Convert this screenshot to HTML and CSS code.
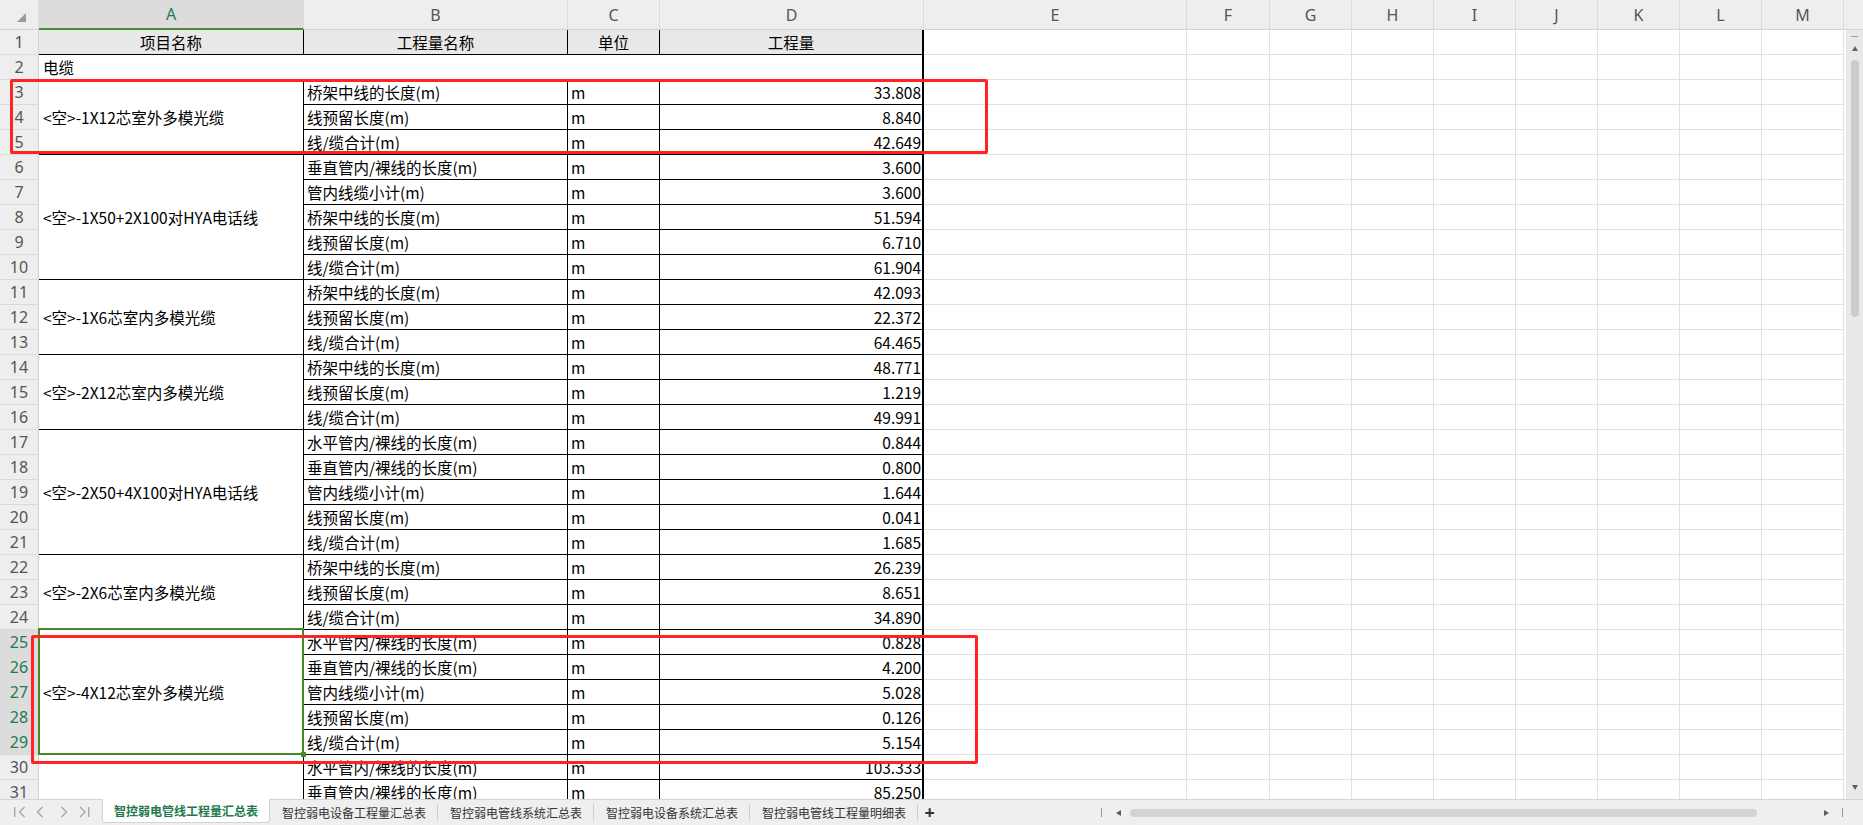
FILE: index.html
```html
<!DOCTYPE html>
<html lang="zh-CN">
<head>
<meta charset="utf-8">
<title>智控弱电管线工程量汇总表</title>
<link rel="stylesheet" href="styles.css">
</head>
<body>
<div class="app">
  <div class="sheet">
    <div class="grid">
      <div class="colhdrs">
        <div class="ch w-rh corner"><svg width="39" height="30" viewBox="0 0 39 30"><polygon points="26,13 26,22 17,22" fill="#9a9a9a"/></svg></div>
        <div class="ch w-a sel">A</div>
        <div class="ch w-b">B</div>
        <div class="ch w-c">C</div>
        <div class="ch w-d">D</div>
        <div class="ch w-e">E</div>
        <div class="ch w-f">F</div>
        <div class="ch w-g">G</div>
        <div class="ch w-g">H</div>
        <div class="ch w-g">I</div>
        <div class="ch w-g">J</div>
        <div class="ch w-g">K</div>
        <div class="ch w-g">L</div>
        <div class="ch w-g">M</div>
      </div>
      <div class="body">
        <div class="rowhdrs">
          <div class="rh">1</div><div class="rh">2</div><div class="rh">3</div><div class="rh">4</div><div class="rh">5</div>
          <div class="rh">6</div><div class="rh">7</div><div class="rh">8</div><div class="rh">9</div><div class="rh">10</div>
          <div class="rh">11</div><div class="rh">12</div><div class="rh">13</div><div class="rh">14</div><div class="rh">15</div>
          <div class="rh">16</div><div class="rh">17</div><div class="rh">18</div><div class="rh">19</div><div class="rh">20</div>
          <div class="rh">21</div><div class="rh">22</div><div class="rh">23</div><div class="rh">24</div>
          <div class="rh sel">25</div><div class="rh sel">26</div><div class="rh sel">27</div><div class="rh sel">28</div><div class="rh sel">29</div>
          <div class="rh">30</div><div class="rh">31</div>
        </div>
        <div class="table">
          <div class="c hd">项目名称</div><div class="c hd">工程量名称</div><div class="c hd">单位</div><div class="c hd dh">工程量</div>
          <div class="c full">电缆</div>

          <div class="c a r3">&lt;空&gt;-1X12芯室外多模光缆</div>
          <div class="c">桥架中线的长度(m)</div><div class="c">m</div><div class="c d">33.808</div>
          <div class="c">线预留长度(m)</div><div class="c">m</div><div class="c d">8.840</div>
          <div class="c">线/缆合计(m)</div><div class="c">m</div><div class="c d">42.649</div>

          <div class="c a r5">&lt;空&gt;-1X50+2X100对HYA电话线</div>
          <div class="c">垂直管内/裸线的长度(m)</div><div class="c">m</div><div class="c d">3.600</div>
          <div class="c">管内线缆小计(m)</div><div class="c">m</div><div class="c d">3.600</div>
          <div class="c">桥架中线的长度(m)</div><div class="c">m</div><div class="c d">51.594</div>
          <div class="c">线预留长度(m)</div><div class="c">m</div><div class="c d">6.710</div>
          <div class="c">线/缆合计(m)</div><div class="c">m</div><div class="c d">61.904</div>

          <div class="c a r3">&lt;空&gt;-1X6芯室内多模光缆</div>
          <div class="c">桥架中线的长度(m)</div><div class="c">m</div><div class="c d">42.093</div>
          <div class="c">线预留长度(m)</div><div class="c">m</div><div class="c d">22.372</div>
          <div class="c">线/缆合计(m)</div><div class="c">m</div><div class="c d">64.465</div>

          <div class="c a r3">&lt;空&gt;-2X12芯室内多模光缆</div>
          <div class="c">桥架中线的长度(m)</div><div class="c">m</div><div class="c d">48.771</div>
          <div class="c">线预留长度(m)</div><div class="c">m</div><div class="c d">1.219</div>
          <div class="c">线/缆合计(m)</div><div class="c">m</div><div class="c d">49.991</div>

          <div class="c a r5">&lt;空&gt;-2X50+4X100对HYA电话线</div>
          <div class="c">水平管内/裸线的长度(m)</div><div class="c">m</div><div class="c d">0.844</div>
          <div class="c">垂直管内/裸线的长度(m)</div><div class="c">m</div><div class="c d">0.800</div>
          <div class="c">管内线缆小计(m)</div><div class="c">m</div><div class="c d">1.644</div>
          <div class="c">线预留长度(m)</div><div class="c">m</div><div class="c d">0.041</div>
          <div class="c">线/缆合计(m)</div><div class="c">m</div><div class="c d">1.685</div>

          <div class="c a r3">&lt;空&gt;-2X6芯室内多模光缆</div>
          <div class="c">桥架中线的长度(m)</div><div class="c">m</div><div class="c d">26.239</div>
          <div class="c">线预留长度(m)</div><div class="c">m</div><div class="c d">8.651</div>
          <div class="c">线/缆合计(m)</div><div class="c">m</div><div class="c d">34.890</div>

          <div class="c a r5">&lt;空&gt;-4X12芯室外多模光缆</div>
          <div class="c">水平管内/裸线的长度(m)</div><div class="c">m</div><div class="c d">0.828</div>
          <div class="c">垂直管内/裸线的长度(m)</div><div class="c">m</div><div class="c d">4.200</div>
          <div class="c">管内线缆小计(m)</div><div class="c">m</div><div class="c d">5.028</div>
          <div class="c">线预留长度(m)</div><div class="c">m</div><div class="c d">0.126</div>
          <div class="c">线/缆合计(m)</div><div class="c">m</div><div class="c d">5.154</div>

          <div class="c a r2"></div>
          <div class="c">水平管内/裸线的长度(m)</div><div class="c">m</div><div class="c d">103.333</div>
          <div class="c">垂直管内/裸线的长度(m)</div><div class="c">m</div><div class="c d">85.250</div>
        </div>
        <div class="empty">
          <div class="ecol w-e"></div>
          <div class="ecol w-f"></div>
          <div class="ecol w-g"></div>
          <div class="ecol w-g"></div>
          <div class="ecol w-g"></div>
          <div class="ecol w-g"></div>
          <div class="ecol w-g"></div>
          <div class="ecol w-g"></div>
          <div class="ecol w-g"></div>
        </div>
      </div>
      <div class="selbox"><div class="handle"></div></div>
      <div class="redbox rb1"></div>
      <div class="redbox rb2"></div>
    </div>
    <div class="vscroll">
      <div class="vs-top"></div>
      <div class="vs-track">
        <div class="vs-dash"></div>
        <div class="tri up"></div>
        <div class="vs-thumb"></div>
        <div class="vs-fill"></div>
        <div class="tri down"></div>
      </div>
    </div>
  </div>
  <div class="tabbar">
    <div class="nav">
      <svg width="102" height="25" viewBox="0 0 102 25">
        <g fill="none" stroke="#a8a8a8" stroke-width="1.4">
          <line x1="14.7" y1="7" x2="14.7" y2="17"/>
          <polyline points="24.5,7 19.5,12 24.5,17"/>
          <polyline points="42.5,7 37.5,12 42.5,17"/>
          <polyline points="61.5,7 66.5,12 61.5,17"/>
          <polyline points="80,7 85,12 80,17"/>
          <line x1="88.7" y1="7" x2="88.7" y2="17"/>
        </g>
      </svg>
    </div>
    <div class="tab active">智控弱电管线工程量汇总表</div>
    <div class="tab">智控弱电设备工程量汇总表</div><div class="sep"></div>
    <div class="tab">智控弱电管线系统汇总表</div><div class="sep"></div>
    <div class="tab">智控弱电设备系统汇总表</div><div class="sep"></div>
    <div class="tab">智控弱电管线工程量明细表</div><div class="sep"></div>
    <div class="plus">+</div>
    <div class="hscroll">
      <div class="hs-bar"></div>
      <div class="tri left"></div>
      <div class="hs-thumb"></div>
      <div class="tri right"></div>
      <div class="hs-bar end"></div>
    </div>
  </div>
</div>
</body>
</html>
```
FILE: styles.css
```css
* { box-sizing: border-box; margin: 0; padding: 0; }
html, body { width: 1863px; height: 825px; overflow: hidden; background: #fff; }
body { font-family: "Noto Sans CJK SC", "Noto Sans", sans-serif; color: #000; }

.app { display: flex; flex-direction: column; width: 1863px; height: 825px; }
.sheet { display: flex; height: 799px; flex: none; overflow: hidden; }
.grid { position: relative; width: 1844px; flex: none; display: flex; flex-direction: column; }

.w-rh { width: 39px; }
.w-a { width: 265px; }
.w-b { width: 264px; }
.w-c { width: 92px; }
.w-d { width: 264px; }
.w-e { width: 263px; }
.w-f { width: 83px; }
.w-g { width: 82px; }

/* column headers */
.colhdrs { display: flex; height: 30px; flex: none; }
.ch {
  flex: none; height: 30px; background: #eeeeee;
  border-right: 1px solid #dadada; border-bottom: 1px solid #d2d2d2;
  font-family: "Noto Sans", sans-serif; font-size: 16px; color: #555;
  display: flex; align-items: center; justify-content: center;
}
.ch.corner { display: block; }
.ch.corner svg { display: block; }
.ch.sel { background: #dcdcdc; color: #1f7a4c; border-bottom: 2px solid #4a8c2b; }

/* body */
.body { display: flex; height: 775px; flex: none; }
.rowhdrs { width: 39px; flex: none; display: flex; flex-direction: column; }
.rh {
  height: 25px; flex: none; background: #eeeeee;
  border-right: 1px solid #d2d2d2; border-bottom: 1px solid #dadada;
  font-family: "Noto Sans", sans-serif; font-size: 16px; color: #555;
  display: flex; align-items: center; justify-content: center;
}
.rh.sel { background: #dcdcdc; color: #1f7a4c; }

.table {
  display: grid; grid-template-columns: 265px 264px 92px 264px;
  grid-auto-rows: 25px; align-content: start; flex: none;
}
.c {
  border-right: 1px solid #000; border-bottom: 1px solid #000;
  font-size: 15.5px; line-height: 24px; white-space: nowrap; overflow: hidden;
  padding: 0 3px; color: #000;
}
.c.hd { background: #e8e8e8; text-align: center; padding: 0; }
.c.dh { border-right-width: 2px; }
.c.a { padding-left: 4px; display: flex; align-items: center; }
.c.d { border-right-width: 2px; text-align: right; padding-right: 1px; }
.c.full { grid-column: span 4; border-right-width: 2px; padding-left: 4px; }
.r2 { grid-row: span 2; }
.r3 { grid-row: span 3; }
.r5 { grid-row: span 5; }

.empty { display: flex; flex: none; }
.ecol {
  flex: none; border-right: 1px solid #e1e1e1;
  background: repeating-linear-gradient(to bottom, #fff 0, #fff 24px, #e1e1e1 24px, #e1e1e1 25px);
}

/* overlays */
.selbox {
  position: absolute; left: 38px; top: 628px; width: 266px; height: 127px;
  border: 2px solid #448a28;
}
.handle {
  position: absolute; right: -4px; bottom: -4px; width: 5px; height: 5px;
  background: #448a28;
}
.redbox { position: absolute; border: 3px solid #ff2323; border-radius: 2px; }
.rb1 { left: 10px; top: 79px; width: 978px; height: 75px; }
.rb2 { left: 31px; top: 635px; width: 947px; height: 129px; }

/* vertical scrollbar */
.vscroll { width: 19px; flex: none; display: flex; flex-direction: column; }
.vs-top { height: 30px; flex: none; background: #eeeeee; border-bottom: 1px solid #d2d2d2; }
.vs-track {
  flex: 1; margin-left: 2px; background: #e9e9eb;
  display: flex; flex-direction: column; align-items: center; padding-top: 6px;
}
.vs-dash { width: 7px; height: 1px; background: #9a9a9a; flex: none; }
.tri { width: 0; height: 0; flex: none; }
.tri.up { margin-top: 9px; border-left: 3px solid transparent; border-right: 3px solid transparent; border-bottom: 5px solid #5f5f5f; }
.tri.down { margin-bottom: 9px; border-left: 3px solid transparent; border-right: 3px solid transparent; border-top: 5px solid #5f5f5f; }
.vs-thumb { margin-top: 9px; width: 8px; height: 257px; border-radius: 4px; background: #cbcbce; flex: none; margin-left: 1px; }
.vs-fill { flex: 1; }

/* tab bar */
.tabbar {
  height: 26px; flex: none; background: #efefef; border-top: 1px solid #d4d4d4;
  display: flex; align-items: stretch; font-size: 12px; color: #333;
}
.nav { width: 102px; flex: none; }
.nav svg { display: block; }
.tab {
  flex: none; display: flex; align-items: center; padding: 0 11px 0 12px;
  white-space: nowrap;
}
.tab.active {
  margin-top: -1px; height: 24px; background: #fff; color: #1e7a4c; font-weight: bold;
  padding: 0 11px; border: 1px solid #d4d4d4; border-top: none;
  border-radius: 0 0 4px 4px;
}
.sep { width: 1px; height: 17px; align-self: center; background: #cfcfcf; flex: none; }
.plus {
  flex: none; margin-left: 5px; width: 13px; font-size: 18px; line-height: 24px;
  font-weight: bold; color: #333; text-align: center; font-family: "Noto Sans", sans-serif;
}
.hscroll { margin-left: auto; width: 762px; flex: none; display: flex; align-items: center; }
.hs-bar { width: 1px; height: 9px; background: #9a9a9a; flex: none; }
.hs-bar.end { margin-left: 13px; }
.tri.left { margin-left: 14px; border-top: 3px solid transparent; border-bottom: 3px solid transparent; border-right: 5px solid #5f5f5f; }
.tri.right { margin-left: 67px; border-top: 3px solid transparent; border-bottom: 3px solid transparent; border-left: 5px solid #5f5f5f; }
.hs-thumb { margin-left: 9px; width: 627px; height: 8px; border-radius: 4px; background: #d3d3d3; flex: none; }
```
